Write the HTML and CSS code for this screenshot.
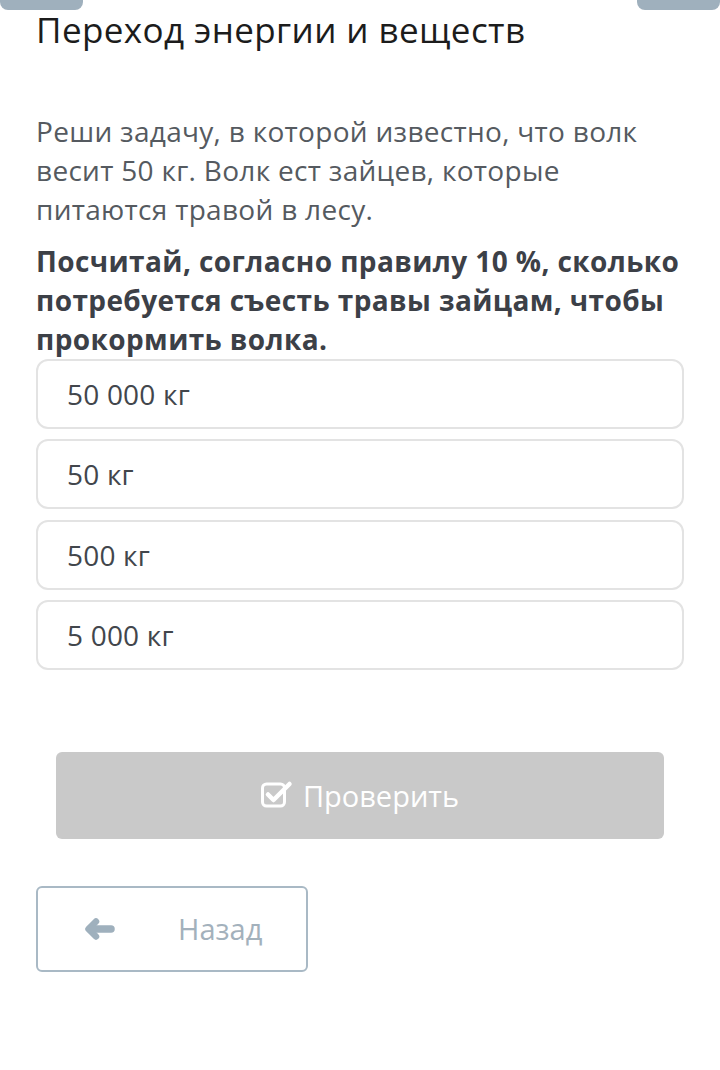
FILE: index.html
```html
<!DOCTYPE html>
<html lang="ru">
<head>
    <meta charset="UTF-8">
    <meta name="viewport" content="width=device-width, initial-scale=1.0">
    <title>Переход энергии и веществ</title>
    <link rel="stylesheet" href="styles.css">
</head>
<body>
    <!-- верхние вкладки -->
    <div class="top-tabs">
        <div class="tab"></div>
        <div class="tab"></div>
    </div>

    <div class="content">
        <h1 class="title">Переход энергии и веществ</h1>

        <p class="task-text">Реши задачу, в которой известно, что волк весит 50 кг. Волк ест зайцев, которые питаются травой в лесу.</p>
        <p class="task-question">Посчитай, согласно правилу 10 %, сколько потребуется съесть травы зайцам, чтобы прокормить волка.</p>

        <div class="options">
            <div class="option">50 000 кг</div>
            <div class="option">50 кг</div>
            <div class="option">500 кг</div>
            <div class="option">5 000 кг</div>
        </div>

        <div class="check-wrap">
            <button class="check-btn">
                <svg class="check-icon" viewBox="0 0 32 28" width="32" height="28">
                    <rect x="1.5" y="4" width="22" height="22" rx="4" fill="none" stroke="#fff" stroke-width="3"/>
                    <path d="M7 14.5 L12.5 20 L28.5 4" fill="none" stroke="#fff" stroke-width="4.5" stroke-linecap="round" stroke-linejoin="round"/>
                </svg>
                Проверить
            </button>
        </div>

        <button class="back-btn">
            <svg class="back-icon" viewBox="0 0 32 24" width="32" height="24">
                <path d="M12 4.5 L4.5 12 L12 19.5" fill="none" stroke="#9fb0bd" stroke-width="6.5" stroke-linecap="round" stroke-linejoin="round"/>
                <path d="M6 12 H27" fill="none" stroke="#9fb0bd" stroke-width="7.5" stroke-linecap="round"/>
            </svg>
            <span class="back-text">Назад</span>
        </button>
    </div>
</body>
</html>
```

FILE: styles.css
```css
* {
    margin: 0;
    padding: 0;
    box-sizing: border-box;
}

body {
    font-family: 'Open Sans', 'Noto Sans', sans-serif;
    background: #fff;
    color: #333;
    width: 720px;
}

.top-tabs {
    display: flex;
    justify-content: space-between;
    height: 10px;
}

.tab {
    width: 83px;
    height: 10px;
    background: #9fb0bd;
    border-radius: 0 0 8px 8px;
}

.content {
    padding: 0 36px;
}

.title {
    font-size: 35px;
    font-weight: 400;
    color: #1c1c1c;
    line-height: 40px;
    letter-spacing: 0.4px;
}

.task-text {
    font-size: 28px;
    line-height: 39px;
    color: #555a60;
    margin-top: 62px;
    letter-spacing: 0.3px;
}

.task-question {
    font-size: 28px;
    line-height: 39px;
    font-weight: 700;
    color: #3c4047;
    margin-top: 13px;
    letter-spacing: 0.4px;
}

.options {
    display: flex;
    flex-direction: column;
    gap: 10.3px;
}

.option {
    height: 70px;
    border: 2px solid #e3e3e3;
    border-radius: 12px;
    padding: 0 29px;
    display: flex;
    align-items: center;
    font-size: 28px;
    letter-spacing: 0.2px;
    color: #42464c;
}

.check-wrap {
    padding: 0 20px;
    margin-top: 82px;
}

.check-btn {
    width: 100%;
    height: 87px;
    background: #c9c9c9;
    border: none;
    border-radius: 6px;
    color: #fff;
    font-family: 'Open Sans', 'Noto Sans', sans-serif;
    font-size: 29px;
    display: flex;
    align-items: center;
    justify-content: center;
    gap: 10px;
}

.check-icon {
    margin-top: -3px;
}

.back-btn {
    margin-top: 47px;
    width: 272px;
    height: 86px;
    border: 2px solid #a9b9c5;
    border-radius: 6px;
    background: #fff;
    display: flex;
    align-items: center;
    padding-left: 46px;
    font-family: 'Open Sans', 'Noto Sans', sans-serif;
}

.back-text {
    font-size: 29px;
    color: #a3b1bc;
    margin-left: 62px;
}
```
